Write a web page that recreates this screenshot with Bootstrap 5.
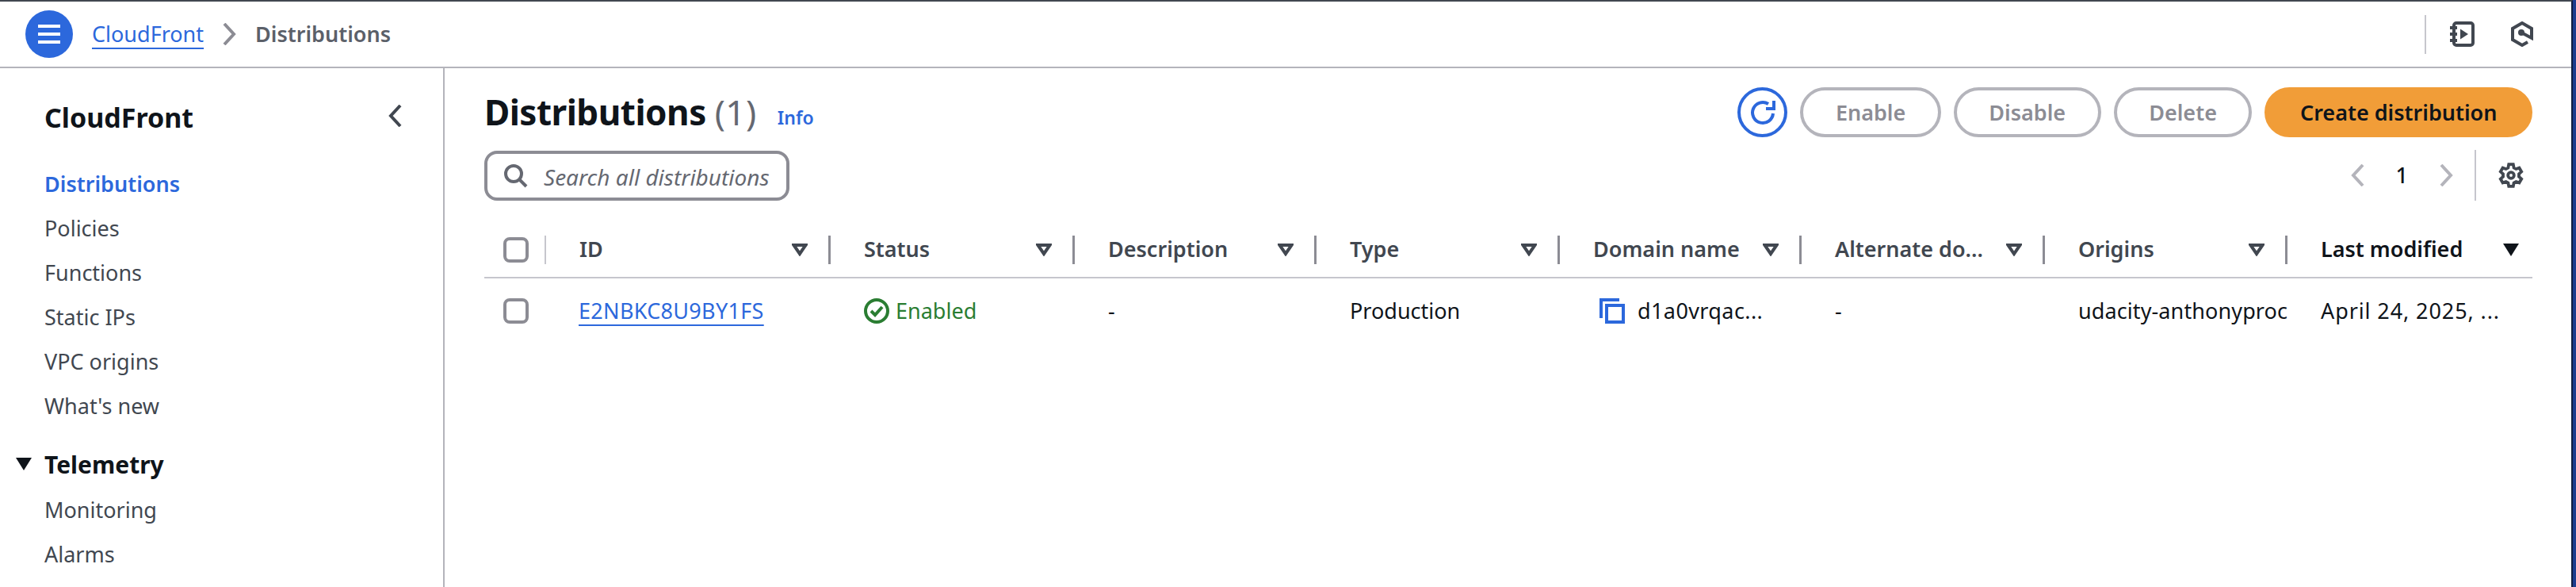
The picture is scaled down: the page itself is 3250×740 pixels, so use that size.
<!DOCTYPE html>
<html lang="en">

<head>
  <meta charset="UTF-8" />
  <title>Distributions | CloudFront</title>
  <link href="https://cdn.jsdelivr.net/npm/bootstrap@5.3.3/dist/css/bootstrap.min.css" rel="stylesheet">
  <style>
    html, body {
      height: 740px;
      overflow: hidden;
    }

    body {
      background-color: #1c3c8e;
      font-family: "Noto Sans", sans-serif;
      font-size: 27px;
      color: #0f141a;
    }

    a {
      color: #2c68dc;
    }

    svg {
      display: block;
      flex: none;
    }

    .console-page {
      width: 3246px;
      height: 740px;
      background-color: #fff;
      border-top: 2px solid #414750;
      border-right: 2px solid #0e1b3f;
    }

    .top-bar {
      height: 84px;
      padding: 0 48px 0 32px;
      border-bottom: 2px solid #b4b4bb;
    }

    .menu-btn {
      width: 60px;
      height: 60px;
      background-color: #2c68dc;
      border: 0;
      padding: 0;
    }

    .crumb-link {
      margin-left: 24px;
      text-decoration-thickness: 2px;
      text-underline-offset: 7px;
    }

    .crumb-current {
      font-weight: 600;
      color: #5b6069;
    }

    .top-divider {
      width: 2px;
      height: 49px;
      margin-right: 29px;
      background-color: #c6c6cd;
    }

    .top-hex {
      margin-left: 46px;
    }

    .side-nav {
      width: 561px;
      flex: none;
      border-right: 2px solid #b4b4bb;
    }

    .side-head {
      height: 118px;
      padding: 38px 52px 0 56px;
      font-size: 34px;
      line-height: 48px;
      font-weight: 700;
    }

    .side-nav .nav-link {
      height: 56px;
      line-height: 56px;
      padding: 0 0 0 56px;
      color: #414750;
    }

    .side-nav .nav-link.active {
      color: #2c68dc;
      font-weight: 600;
    }

    .side-section {
      height: 60px;
      margin-top: 15px;
      padding-left: 20px;
      font-size: 30px;
      font-weight: 700;
    }

    .side-section svg {
      margin-right: 16px;
    }

    .main-area {
      padding: 24px 49px 0 50px;
      min-width: 0;
    }

    .page-title {
      font-size: 44px;
      font-weight: 700;
      line-height: 63px;
      letter-spacing: -.5px;
      margin: 0;
    }

    .page-count {
      font-weight: 400;
      color: #656871;
      letter-spacing: .5px;
    }

    .info-link {
      font-size: 23px;
      font-weight: 600;
      text-decoration: none;
      margin-left: 26px;
      margin-top: 14px;
    }

    .refresh-btn {
      width: 63px;
      height: 63px;
      padding: 0;
      border: 4px solid #2c68dc;
    }

    .pill-btn {
      height: 63px;
      padding: 0 40.5px;
      border-width: 4px;
      font-size: 27px;
      font-weight: 600;
      line-height: 1;
    }

    .pill-btn:disabled {
      border-color: #b4b4bb;
      color: #8c8c94;
      opacity: 1;
    }

    .pill-create {
      background-color: #f19d38;
      border-color: #f19d38;
      color: #0f141a;
    }

    .search-box {
      width: 385px;
      height: 63px;
      margin-top: 17px;
      padding-left: 21px;
      border: 4px solid #8c8c94;
      border-radius: 16px;
    }

    .search-box input {
      border: 0;
      outline: 0;
      padding: 2px 0 0;
      margin-left: 20px;
      width: 300px;
      font-size: 28px;
      font-style: italic;
      color: #656871;
    }

    .search-box input::placeholder {
      color: #656871;
      opacity: 1;
    }

    .pager {
      color: #0f141a;
      font-weight: 500;
    }

    .pager-num {
      margin: 0 40px;
    }

    .pager-divider {
      width: 2px;
      height: 64px;
      margin: 0 27px;
      background-color: #c6c6cd;
    }

    .gear-icon {
      margin-right: 10px;
    }

    .dist-table {
      table-layout: fixed;
      width: 2584px;
      margin-top: 27px;
      border-collapse: separate;
      border-spacing: 0;
    }

    .dist-table th {
      height: 71px;
      padding: 0;
      border-bottom: 2px solid #c6c6cd;
      font-weight: 600;
      color: #414750;
    }

    .dist-table td {
      height: 82px;
      padding: 0 0 0 42px;
      white-space: nowrap;
      overflow: hidden;
    }

    .dist-table td.cell-check {
      padding-left: 24px;
    }

    .head-cell {
      height: 36px;
      padding: 0 26px 0 42px;
      border-right: 3px solid #8c8c94;
    }

    .head-check {
      height: 36px;
      padding-left: 24px;
      border-right: 2px solid #c6c6cd;
    }

    .head-last {
      border-right: 0;
      padding-right: 17px;
      color: #0f141a;
    }

    .dist-table .form-check-input {
      width: 32px;
      height: 32px;
      margin: 0;
      border: 4px solid #8c8c94;
      border-radius: 8px;
    }

    .id-link {
      margin-left: -1px;
      letter-spacing: .3px;
      text-decoration-thickness: 2px;
      text-underline-offset: 7px;
    }

    .status-ok {
      color: #2a7d32;
    }

    .copy-icon {
      margin: 0 16px 0 8px;
    }

    .wide-digits {
      letter-spacing: .4px;
    }

    .wide-origin {
      letter-spacing: .1px;
    }

    .wide-date {
      letter-spacing: .9px;
    }
  </style>
</head>

<body>
  <div class="console-page d-flex flex-column">
    <!-- top bar -->
    <header class="top-bar d-flex align-items-center">
      <button class="menu-btn rounded-circle d-flex align-items-center justify-content-center" aria-label="Menu">
        <svg width="28" height="24" viewBox="0 0 28 24" fill="#fff"><rect width="28" height="4" /><rect y="10" width="28" height="4" /><rect y="20" width="28" height="4" /></svg>
      </button>
      <a href="#" class="crumb-link">CloudFront</a>
      <svg class="mx-4" width="17" height="28" viewBox="0 0 17 28" fill="none" stroke="#8c8c94" stroke-width="4"><path d="M2 1 L14 14 L2 27" /></svg>
      <span class="crumb-current">Distributions</span>
      <span class="top-divider ms-auto"></span>
      <svg width="32" height="32" viewBox="0 0 32 32" fill="none" stroke="#414750" stroke-width="4"><rect x="6" y="2" width="24" height="28" rx="3" /><path d="M1 8h9M1 16h9M1 24h9" /><path d="M14 9.500 L24 16 L14 22.500z" fill="#414750" stroke="none" /></svg>
      <svg class="top-hex" width="28" height="32" viewBox="0 0 28 32" fill="none" stroke="#414750" stroke-width="4"><path d="M21 26 L14 30 L2 23 V9 L14 2 L26 9 V21 L13 14" /><circle cx="13" cy="14" r="4" fill="#414750" stroke="none" /></svg>
    </header>

    <div class="d-flex flex-grow-1">
      <!-- left navigation -->
      <nav class="side-nav">
        <div class="side-head d-flex justify-content-between">
          <span>CloudFront</span>
          <svg class="mt-2" width="17" height="28" viewBox="0 0 17 28" fill="none" stroke="#414750" stroke-width="4"><path d="M15 1 L3 14 L15 27" /></svg>
        </div>
        <div class="nav flex-column">
          <a class="nav-link active" href="#">Distributions</a>
          <a class="nav-link" href="#">Policies</a>
          <a class="nav-link" href="#">Functions</a>
          <a class="nav-link" href="#">Static IPs</a>
          <a class="nav-link" href="#">VPC origins</a>
          <a class="nav-link" href="#">What's new</a>
        </div>
        <div class="side-section d-flex align-items-center">
          <svg width="20" height="16" viewBox="0 0 20 16" fill="#0f141a"><polygon points="0,0 20,0 10,16" /></svg>
          <span>Telemetry</span>
        </div>
        <div class="nav flex-column">
          <a class="nav-link" href="#">Monitoring</a>
          <a class="nav-link" href="#">Alarms</a>
        </div>
      </nav>

      <!-- main content -->
      <main class="main-area flex-grow-1">
        <div class="d-flex justify-content-between">
          <div class="d-flex align-items-center">
            <h1 class="page-title">Distributions <span class="page-count">(1)</span></h1>
            <a href="#" class="info-link">Info</a>
          </div>
          <div class="d-flex align-items-center gap-3">
            <button class="btn refresh-btn rounded-circle d-flex align-items-center justify-content-center" aria-label="Refresh">
              <svg width="36" height="32" viewBox="0 0 36 32" fill="none" stroke="#2c68dc" stroke-width="4"><path d="M31 17 A13 13 0 1 1 25 5" /><path d="M32 1 V11 H22" /></svg>
            </button>
            <button class="btn pill-btn rounded-pill" disabled>Enable</button>
            <button class="btn pill-btn rounded-pill" disabled>Disable</button>
            <button class="btn pill-btn rounded-pill" disabled>Delete</button>
            <button class="btn pill-btn pill-create rounded-pill">Create distribution</button>
          </div>
        </div>

        <div class="d-flex justify-content-between align-items-end">
          <div class="search-box d-flex align-items-center">
            <svg width="30" height="30" viewBox="0 0 30 30" fill="none" stroke="#656871" stroke-width="4"><circle cx="12" cy="12" r="10" /><path d="M19 19 L28 28" /></svg>
            <input type="text" placeholder="Search all distributions" />
          </div>
          <div class="pager d-flex align-items-center">
            <svg width="17" height="28" viewBox="0 0 17 28" fill="none" stroke="#b4b4bb" stroke-width="4"><path d="M15 1 L3 14 L15 27" /></svg>
            <span class="pager-num">1</span>
            <svg width="17" height="28" viewBox="0 0 17 28" fill="none" stroke="#b4b4bb" stroke-width="4"><path d="M2 1 L14 14 L2 27" /></svg>
            <span class="pager-divider"></span>
            <svg class="gear-icon" width="34" height="32" viewBox="0 0 16 15" fill="none" stroke="#414750" stroke-width="1.800"><path d="M6.700 1H9.300L9.700 3 11 3.750 12.900 3.100 14.200 5.350 12.700 6.700V8.300L14.200 9.650 12.900 11.900 11 11.250 9.700 12 9.300 14H6.700L6.300 12 5 11.250 3.100 11.900 1.800 9.650 3.300 8.300V6.700L1.800 5.350 3.100 3.100 5 3.750 6.300 3z" /><circle cx="8" cy="7.500" r="1.800" /></svg>
          </div>
        </div>

        <table class="dist-table">
          <colgroup>
            <col style="width: 78px">
            <col style="width: 359px">
            <col style="width: 308px">
            <col style="width: 305px">
            <col style="width: 307px">
            <col style="width: 305px">
            <col style="width: 307px">
            <col style="width: 306px">
            <col style="width: 309px">
          </colgroup>
          <thead>
            <tr>
              <th><div class="head-check d-flex align-items-center"><input class="form-check-input" type="checkbox" aria-label="Select all"></div></th>
              <th><div class="head-cell d-flex align-items-center justify-content-between">ID<svg width="20" height="16" viewBox="0 0 20 16" fill="none" stroke="#414750" stroke-width="4"><polygon points="2.500,2 17.500,2 10,13" /></svg></div></th>
              <th><div class="head-cell d-flex align-items-center justify-content-between">Status<svg width="20" height="16" viewBox="0 0 20 16" fill="none" stroke="#414750" stroke-width="4"><polygon points="2.500,2 17.500,2 10,13" /></svg></div></th>
              <th><div class="head-cell d-flex align-items-center justify-content-between">Description<svg width="20" height="16" viewBox="0 0 20 16" fill="none" stroke="#414750" stroke-width="4"><polygon points="2.500,2 17.500,2 10,13" /></svg></div></th>
              <th><div class="head-cell d-flex align-items-center justify-content-between">Type<svg width="20" height="16" viewBox="0 0 20 16" fill="none" stroke="#414750" stroke-width="4"><polygon points="2.500,2 17.500,2 10,13" /></svg></div></th>
              <th><div class="head-cell d-flex align-items-center justify-content-between">Domain name<svg width="20" height="16" viewBox="0 0 20 16" fill="none" stroke="#414750" stroke-width="4"><polygon points="2.500,2 17.500,2 10,13" /></svg></div></th>
              <th><div class="head-cell d-flex align-items-center justify-content-between">Alternate do...<svg width="20" height="16" viewBox="0 0 20 16" fill="none" stroke="#414750" stroke-width="4"><polygon points="2.500,2 17.500,2 10,13" /></svg></div></th>
              <th><div class="head-cell d-flex align-items-center justify-content-between">Origins<svg width="20" height="16" viewBox="0 0 20 16" fill="none" stroke="#414750" stroke-width="4"><polygon points="2.500,2 17.500,2 10,13" /></svg></div></th>
              <th><div class="head-cell head-last d-flex align-items-center justify-content-between">Last modified<svg width="20" height="16" viewBox="0 0 20 16" fill="#0f141a"><polygon points="0,0 20,0 10,16" /></svg></div></th>
            </tr>
          </thead>
          <tbody>
            <tr>
              <td class="cell-check"><input class="form-check-input d-block" type="checkbox" aria-label="Select row"></td>
              <td><a href="#" class="id-link">E2NBKC8U9BY1FS</a></td>
              <td>
                <div class="status-ok d-flex align-items-center gap-2">
                  <svg width="32" height="32" viewBox="0 0 32 32" fill="none" stroke="#2a7d32" stroke-width="4"><circle cx="16" cy="16" r="14" /><path d="M9 16 L14 21 L23 11" /></svg>
                  <span>Enabled</span>
                </div>
              </td>
              <td>-</td>
              <td>Production</td>
              <td>
                <div class="d-flex align-items-center">
                  <svg class="copy-icon" width="32" height="32" viewBox="0 0 32 32" fill="none" stroke="#2c68dc" stroke-width="4"><path d="M25 2 H2 V25" /><rect x="9" y="9" width="21" height="21" /></svg>
                  <span class="wide-digits">d1a0vrqac...</span>
                </div>
              </td>
              <td>-</td>
              <td class="wide-origin">udacity-anthonyproc</td>
              <td class="wide-date">April 24, 2025, ...</td>
            </tr>
          </tbody>
        </table>
      </main>
    </div>
  </div>
  <script src="https://cdn.jsdelivr.net/npm/bootstrap@5.3.3/dist/js/bootstrap.bundle.min.js"></script>
</body>

</html>
